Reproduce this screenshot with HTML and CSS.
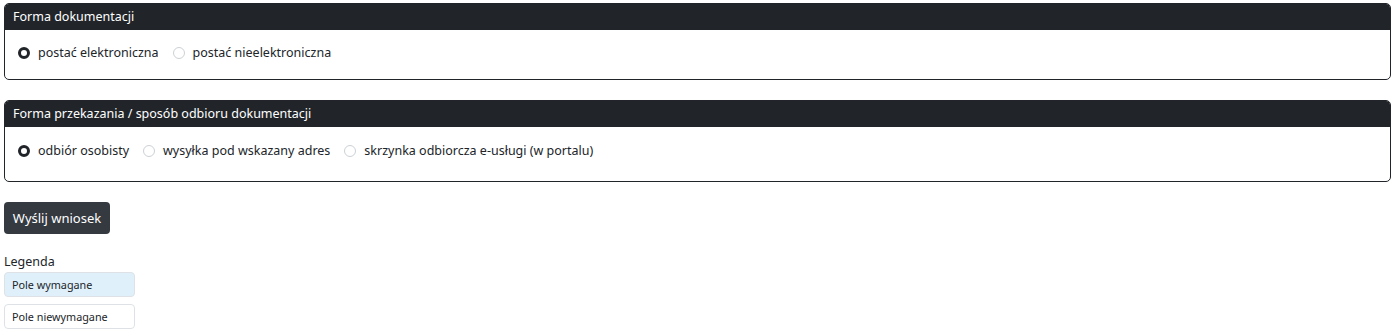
FILE: index.html
```html
<!DOCTYPE html>
<html lang="pl">
<head>
    <meta charset="UTF-8">
    <title>Wniosek</title>
    <link rel="stylesheet" href="styles.css">
</head>
<body>
    <div class="page">
        <div class="card">
            <div class="card-head">Forma dokumentacji</div>
            <div class="card-body">
                <label class="opt"><span class="radio checked"></span>postać elektroniczna</label>
                <label class="opt"><span class="radio"></span>postać nieelektroniczna</label>
            </div>
        </div>

        <div class="card card-tall">
            <div class="card-head">Forma przekazania / sposób odbioru dokumentacji</div>
            <div class="card-body">
                <label class="opt"><span class="radio checked"></span>odbiór osobisty</label>
                <label class="opt"><span class="radio"></span>wysyłka pod wskazany adres</label>
                <label class="opt"><span class="radio"></span>skrzynka odbiorcza e-usługi (w portalu)</label>
            </div>
        </div>

        <button class="btn-send">Wyślij wniosek</button>

        <div class="legend">
            <div class="legend-title">Legenda</div>
            <div class="legend-box req">Pole wymagane</div>
            <div class="legend-box">Pole niewymagane</div>
        </div>
    </div>
</body>
</html>
```

FILE: styles.css
```css
body{
    margin:0;
    font-family: "Noto Sans", "Open Sans", sans-serif;
    font-size:12.5px;
    color:#212529;
    background:#fff;
}
.page{
    padding:3px 4px 0 4px;
}
.card{
    border:1px solid #212529;
    border-radius:5px;
    overflow:hidden;
    margin-bottom:20px;
}
.card-head{
    background-color:#212529;
    color:#fff;
    height:26px;
    line-height:26px;
    padding-left:8px;
}
.card-body{
    display:flex;
    align-items:flex-start;
    box-sizing:border-box;
    height:49px;
    padding:14px 0 0 13px;
    line-height:18px;
}
.card-tall .card-body{
    height:54px;
    padding-top:15px;
}
.opt{
    display:flex;
    align-items:center;
    margin-right:14px;
}
.radio{
    width:12px;
    height:12px;
    box-sizing:border-box;
    border-radius:50%;
    border:1px solid #ccd1d6;
    margin-right:8px;
}
.radio.checked{
    border:3.5px solid #212529;
}
.btn-send{
    display:block;
    height:32px;
    width:106px;
    border:none;
    border-radius:4px;
    background-color:#343a40;
    color:#fff;
    font:inherit;
    font-size:13px;
    margin:0 0 19px 0;
    padding:0;
}
.legend-title{
    line-height:18px;
    margin-bottom:1px;
}
.legend-box{
    width:131px;
    height:25px;
    box-sizing:border-box;
    border:1px solid #dee2e6;
    border-radius:4px;
    font-size:10.8px;
    line-height:23px;
    padding-left:7px;
    margin-bottom:7px;
}
.legend-box.req{
    background-color:#e0f0fb;
}
```
